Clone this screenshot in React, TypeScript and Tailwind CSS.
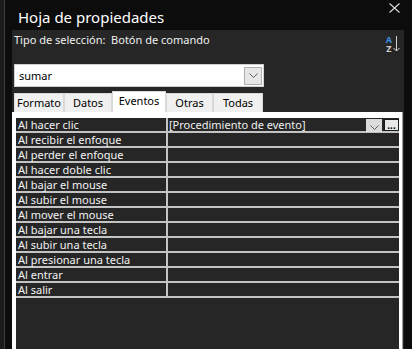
const events = [
  'Al hacer clic',
  'Al recibir el enfoque',
  'Al perder el enfoque',
  'Al hacer doble clic',
  'Al bajar el mouse',
  'Al subir el mouse',
  'Al mover el mouse',
  'Al bajar una tecla',
  'Al subir una tecla',
  'Al presionar una tecla',
  'Al entrar',
  'Al salir',
];

const tabs = [
  { label: 'Formato', width: 'w-[50px]' },
  { label: 'Datos', width: 'w-[48px]' },
  { label: 'Eventos', width: 'w-[54px]', active: true },
  { label: 'Otras', width: 'w-[47px]' },
  { label: 'Todas', width: 'w-[50px]' },
];

function Chevron() {
  return (
    <svg width="9" height="5" viewBox="0 0 9 5" fill="none" stroke="#606060" strokeWidth="1">
      <path d="M0.5 0.5 L4.5 4.5 L8.5 0.5" />
    </svg>
  );
}

export default function App() {
  return (
    <div
      className="w-[412px] h-[349px] bg-[#0c0c0c] flex overflow-hidden text-white"
      style={{ fontFamily: '"Noto Sans", "Open Sans", sans-serif' }}
    >
      {/* left edge of neighbouring window */}
      <div className="w-[4px] bg-[#1c1c1c]" />
      <div className="w-[1px] bg-[#3c3c3c]" />

      <div className="flex-1 flex flex-col">
        {/* Title bar */}
        <div className="h-[30px] flex items-start justify-between">
          <h1 className="pl-[13px] pt-[8px] text-[15px] leading-[18px] text-white">Hoja de propiedades</h1>
          <svg className="mt-[3px] mr-[12px]" width="11" height="10" viewBox="0 0 11 10" stroke="#d8d8d8" strokeWidth="1.1">
            <path d="M0.5 0.5 L10.5 9.5 M10.5 0.5 L0.5 9.5" />
          </svg>
        </div>

        {/* Panel */}
        <div className="flex-1 flex">
          <div className="w-[7px]" />
          <div className="w-[392px] bg-[#262626] flex flex-col">
            {/* Selection type */}
            <div className="h-[34px] flex items-start justify-between">
              <span className="pl-[2px] pt-[3px] text-[11px] leading-[14px] text-[#f0f0f0] whitespace-pre">
                Tipo de selección:  Botón de comando
              </span>
              <div className="mt-[5px] mr-[4px] flex items-start gap-[1px]">
                <div className="flex flex-col items-center text-[9px] leading-[9px] font-bold">
                  <span className="text-[#3a8ee0]">A</span>
                  <span className="text-[#d0d0d0]">Z</span>
                </div>
                <svg width="7" height="17" viewBox="0 0 7 17" fill="none" stroke="#d0d0d0" strokeWidth="1">
                  <path d="M3.5 1 V16 M0.5 13 L3.5 16 L6.5 13" />
                </svg>
              </div>
            </div>

            {/* Combo box */}
            <div className="ml-[2px] w-[250px] h-[23px] bg-white border border-[#cfcfcf] flex items-center justify-between">
              <span className="pl-[4px] text-[11px] leading-[14px] text-black">sumar</span>
              <div className="mr-[1px] w-[18px] h-[18px] bg-[#e6e6e6] border border-[#adadad] flex items-center justify-center">
                <Chevron />
              </div>
            </div>

            {/* Tabs */}
            <div className="mt-[4px] h-[21px] pl-[2px] flex items-end">
              {tabs.map((t) =>
                t.active ? (
                  <div
                    key={t.label}
                    className={`${t.width} h-[21px] bg-white border border-b-0 border-[#d9d9d9] flex items-start justify-center pt-[2px] text-[11px] leading-[14px] text-black`}
                  >
                    {t.label}
                  </div>
                ) : (
                  <div
                    key={t.label}
                    className={`${t.width} h-[19px] bg-[#f0f0f0] border border-b-0 border-[#d9d9d9] flex items-start justify-center pt-[2px] text-[11px] leading-[14px] text-black`}
                  >
                    {t.label}
                  </div>
                )
              )}
            </div>

            {/* Property grid frame */}
            <div className="flex-1 w-[391px] bg-white border-r border-[#9a9a9a] pl-[4px] pr-[3px] pt-[6px]">
              <div className="h-full bg-[#262626]">
                {events.map((e, i) => (
                  <div key={e} className="flex h-[15px] border-b-2 border-[#c4c4c4]">
                    <div className="w-[152px] border-r-2 border-[#c4c4c4] pl-[2px] text-[11px] leading-[13px] text-[#f2f2f2] whitespace-nowrap">
                      {e}
                    </div>
                    <div className="flex-1 flex items-start justify-between">
                      {i === 0 && (
                        <>
                          <span className="pl-[1px] text-[11px] leading-[13px] text-[#eeeeee] whitespace-nowrap">
                            [Procedimiento de evento]
                          </span>
                          <div className="flex items-start gap-[2px] pt-[1px]">
                            <div className="w-[16px] h-[13px] bg-[#dcdcdc] flex items-end justify-center pb-[2px]">
                              <Chevron />
                            </div>
                            <div className="w-[15px] h-[12px] bg-[#e8e8e8] border border-[#1a1a1a] flex items-center justify-center text-[10px] leading-[8px] font-bold text-black">
                              ...
                            </div>
                          </div>
                        </>
                      )}
                    </div>
                  </div>
                ))}
              </div>
            </div>
          </div>
          <div className="flex-1" />
        </div>
      </div>
    </div>
  );
}
